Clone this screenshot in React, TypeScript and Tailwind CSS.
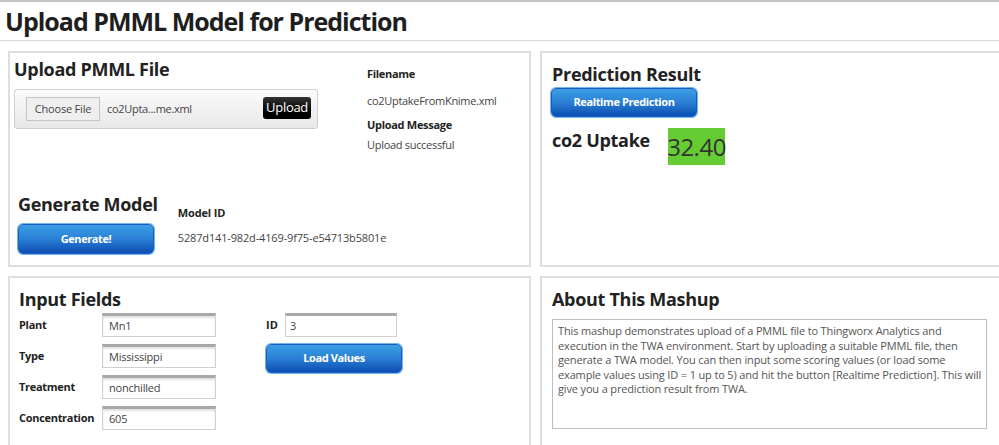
import React from "react";

const blueBtn =
  "flex items-center justify-center rounded-[5px] border border-[#1b5fc4] bg-gradient-to-b from-[#3c9fe3] via-[#2a7fd4] to-[#0f4db3] text-white font-bold text-[11px] tracking-[-0.4px] shadow-[0_0_0_1px_#6fb6f2]";

function Field({ label, value }: { label: string; value: string }) {
  return (
    <div className="flex items-center h-[24px]">
      <div className="w-[83px] text-[11px] tracking-[-0.3px] font-bold text-[#222]">{label}</div>
      <div className="w-[114px] h-[24px] border border-[#d0d0d0] border-t-[3px] border-t-[#a8a8a8] shadow-[inset_0_2px_2px_rgba(0,0,0,0.12)] px-[6px] text-[11px] tracking-[-0.2px] text-[#444] flex items-center">
        {value}
      </div>
    </div>
  );
}

export default function App() {
  return (
    <div className="w-[999px] h-[445px] overflow-hidden bg-white font-['Open_Sans',sans-serif] text-[#222]">
      <div className="h-[41px] border-t-2 border-[#c4c4c4] border-b border-b-[#d8d8d8] pl-[5px] flex items-center">
        <h1 className="text-[25px] font-bold tracking-[-1px] text-[#1e1e1e] leading-none mt-[1px]">
          Upload PMML Model for Prediction
        </h1>
      </div>
      <div className="grid grid-cols-[523px_523px] grid-rows-[216px_200px] gap-x-[9px] gap-y-[9px] pl-[8px] pt-[10px]">
        {/* Upper left */}
        <div className="border-2 border-[#dedede] flex flex-col">
          <div className="flex">
            <div className="ml-[4px] mt-[4px]">
              <div className="text-[18px] font-bold leading-[24px] tracking-[-0.3px]">Upload PMML File</div>
              <div className="mt-[8px] w-[304px] h-[40px] rounded-[3px] border border-[#cfcfcf] bg-gradient-to-b from-[#fbfbfb] to-[#e8e8e8] flex items-center pl-[11px] pr-[6px]">
                <div className="h-[24px] w-[74px] border border-[#c4c4c4] bg-[#efefef] text-[11px] tracking-[-0.2px] text-[#444] flex items-center justify-center">
                  Choose File
                </div>
                <div className="ml-[7px] text-[11px] tracking-[-0.3px] text-[#444]">co2Upta...me.xml</div>
                <div className="ml-auto mb-[3px] h-[22px] px-[3px] rounded-[3px] bg-gradient-to-b from-[#333] to-[#000] text-white text-[13px] tracking-[-0.3px] flex items-center">
                  Upload
                </div>
              </div>
            </div>
            <div className="ml-[49px] mt-[13px] text-[11px] tracking-[-0.3px]">
              <div className="font-bold leading-[16px]">Filename</div>
              <div className="mt-[11px] text-[#444] leading-[16px]">co2UptakeFromKnime.xml</div>
              <div className="mt-[8px] font-bold leading-[16px]">Upload Message</div>
              <div className="mt-[4px] text-[#444] leading-[16px]">Upload successful</div>
            </div>
          </div>
          <div className="mt-auto mb-[11px] flex ml-[8px]">
            <div>
              <div className="text-[18px] font-bold leading-[24px] tracking-[-0.3px]">Generate Model</div>
              <div className={blueBtn + " mt-[8px] w-[136px] h-[30px]"}>Generate!</div>
            </div>
            <div className="ml-[20px] mt-[13px] text-[11px] tracking-[-0.15px]">
              <div className="font-bold leading-[16px]">Model ID</div>
              <div className="mt-[9px] text-[#444] leading-[16px]">5287d141-982d-4169-9f75-e54713b5801e</div>
            </div>
          </div>
        </div>

        {/* Upper right */}
        <div className="border-2 border-[#dedede] pl-[10px] pt-[9px]">
          <div className="text-[18px] font-bold leading-[24px] tracking-[-0.3px]">Prediction Result</div>
          <div className={blueBtn + " w-[146px] h-[29px] -ml-[1px] mt-[2px]"}>Realtime Prediction</div>
          <div className="flex mt-[11px]">
            <div className="w-[116px] text-[18px] font-bold leading-[24px] tracking-[-0.3px]">co2 Uptake</div>
            <div className="w-[57px] h-[37px] bg-[#66cc33] text-[#333] text-[24px] flex items-center justify-center tracking-[-0.5px]">
              32.40
            </div>
          </div>
        </div>

        {/* Lower left */}
        <div className="border-2 border-[#dedede] pl-[9px] pt-[9px]">
          <div className="text-[18px] font-bold leading-[24px] tracking-[-0.3px]">Input Fields</div>
          <div className="flex">
            <div className="flex flex-col gap-[7px] mt-[2px]">
              <Field label="Plant" value="Mn1" />
              <Field label="Type" value="Mississippi" />
              <Field label="Treatment" value="nonchilled" />
              <Field label="Concentration" value="605" />
            </div>
            <div className="ml-[50px] mt-[2px]">
              <div className="flex items-center h-[24px]">
                <div className="w-[19px] text-[11px] font-bold">ID</div>
                <div className="w-[112px] h-[24px] border border-[#d0d0d0] border-t-[3px] border-t-[#a8a8a8] px-[4px] text-[11px] text-[#444] flex items-center">
                  3
                </div>
              </div>
              <div className={blueBtn + " mt-[7px] w-[136px] h-[29px]"}>Load Values</div>
            </div>
          </div>
        </div>

        {/* Lower right */}
        <div className="border-2 border-[#dedede] pl-[10px] pt-[9px]">
          <div className="text-[18px] font-bold leading-[24px] tracking-[-0.3px]">About This Mashup</div>
          <div className="mt-[8px] w-[435px] h-[110px] border border-[#bdbdbd] px-[5px] pt-[4px] text-[11px] tracking-[-0.15px] leading-[14.6px] text-[#555] whitespace-nowrap">
            This mashup demonstrates upload of a PMML file to Thingworx Analytics and
            <br />
            execution in the TWA environment. Start by uploading a suitable PMML file, then
            <br />
            generate a TWA model. You can then input some scoring values (or load some
            <br />
            example values using ID = 1 up to 5) and hit the button [Realtime Prediction]. This will
            <br />
            give you a prediction result from TWA.
          </div>
        </div>
      </div>
    </div>
  );
}
